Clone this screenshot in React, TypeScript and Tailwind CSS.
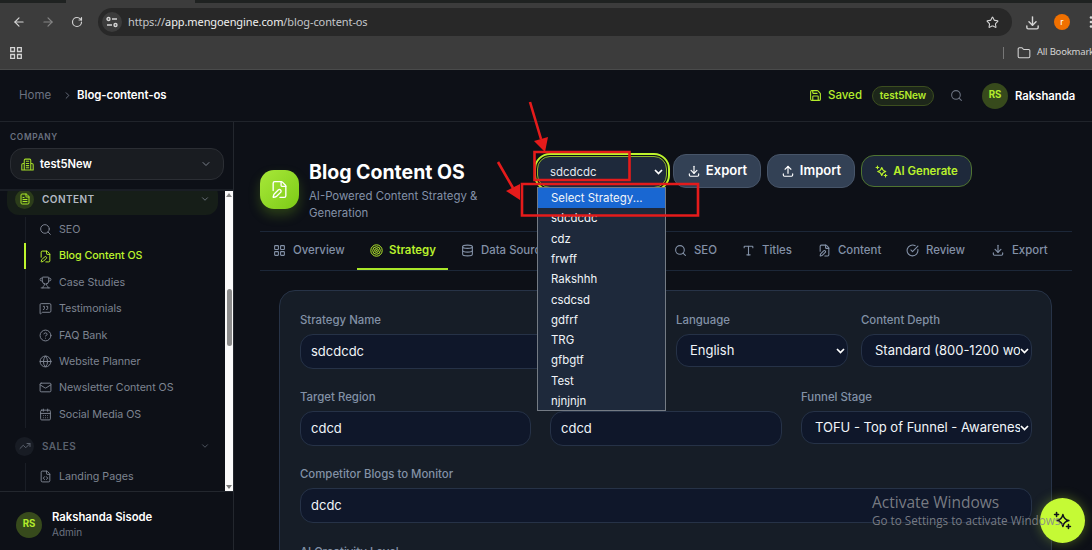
import type { ReactNode } from "react";
import {
  ArrowLeft, ArrowRight, CalendarDays, ChevronDown, ChevronRight, CircleCheckBig, CircleHelp,
  Database, FileCode, FilePen, FileText, Folder, Globe, LayoutGrid, Mail, MessageSquareQuote,
  RotateCw, Save, Search, Star, TrendingUp, Trophy, Type,
} from "lucide-react";
import { TbDownload, TbUpload } from "react-icons/tb";

function Sparkle({ size, width = 2 }: { size: number; width?: number }) {
  return (
    <svg width={size} height={size} viewBox="0 0 24 24" fill="none" stroke="currentColor" strokeWidth={width} strokeLinejoin="round" strokeLinecap="round" className="shrink-0">
      <path d="M12.500 4.500c1 4.700 2.800 6.500 7.500 7.500-4.700 1-6.500 2.800-7.500 7.500C11.500 14.800 9.700 13 5 12c4.700-1 6.500-2.800 7.500-7.500Z" />
      <path d="M4.500 2v5M2 4.500h5M19.500 17v5M17 19.500h5" />
    </svg>
  );
}

function Rings({ size }: { size: number }) {
  return (
    <svg width={size} height={size} viewBox="0 0 24 24" fill="none" stroke="currentColor" strokeWidth="1.8" className="shrink-0">
      <circle cx="12" cy="12" r="10.500" />
      <circle cx="12" cy="12" r="7" />
      <circle cx="12" cy="12" r="3.500" />
      <circle cx="12" cy="12" r="0.800" />
    </svg>
  );
}

function Building() {
  return (
    <svg width="13" height="13" viewBox="0 0 24 24" fill="none" stroke="currentColor" strokeWidth="2" strokeLinejoin="round" className="shrink-0">
      <path d="M6 22V4q0-2 2-2h8q2 0 2 2v18M6 10H4q-2.500 0-2.500 2.500V22h21v-9.500Q22.500 10 20 10h-2M9 6h6M9 10h6M9 14h6M9 18h6" />
    </svg>
  );
}

function Caret({ className }: { className?: string }) {
  return (
    <svg width="9" height="6" viewBox="0 0 9 6" fill="none" stroke="#fff" strokeWidth="1.700" className={className}>
      <path d="M1 1l3.500 3.500L8 1" />
    </svg>
  );
}

function BrowserBar() {
  return (
    <div className="flex h-[70px] shrink-0 flex-col border-b border-[#4a4b4b] bg-[#3c3c3c] text-[#d5d5d5]">
      <div className="flex h-[3px] shrink-0 bg-[#1f2221]">
        <div className="ml-[66px] w-[129px] bg-[#3c3c3c]" />
      </div>
      <div className="mt-[5px] flex h-7 shrink-0 items-center">
        <ArrowLeft size={14} className="ml-3 shrink-0" />
        <ArrowRight size={14} className="ml-[15px] shrink-0 text-[#858585]" />
        <RotateCw size={12} strokeWidth={2.300} className="ml-[16px] shrink-0" />
        <div className="ml-[15px] flex h-7 w-[914px] shrink-0 items-center rounded-full bg-[#282828] pl-1">
          <div className="flex h-5 w-5 items-center justify-center rounded-full bg-[#3c3c3c]">
            <svg width="12" height="12" viewBox="0 0 12 12" fill="none" stroke="currentColor" strokeWidth="1.400">
              <circle cx="2.500" cy="3" r="1.500" /><path d="M6 3h5M1 9h5" /><circle cx="9.500" cy="9" r="1.500" />
            </svg>
          </div>
          <span className="ml-[6px] whitespace-nowrap font-['Noto_Sans',sans-serif] text-[11px] tracking-[-0.100px] text-[#c4c6ca]">
            https://<span className="text-[#f0f0f0]">app.mengoengine.com</span>/blog-content-os
          </span>
          <Star size={13} className="mr-[13px] ml-auto" />
        </div>
        <TbDownload size={17} className="ml-[12px] shrink-0" />
        <div className="ml-[13px] flex h-4 w-4 shrink-0 items-center justify-center rounded-full bg-[#f07000] text-[9px] text-white">r</div>
        <svg width="4" height="14" viewBox="0 0 4 14" fill="currentColor" className="ml-[19px] shrink-0">
          <circle cx="2" cy="2.500" r="1.300" /><circle cx="2" cy="7" r="1.300" /><circle cx="2" cy="11.500" r="1.300" />
        </svg>
      </div>
      <div className="flex h-[33px] items-center overflow-hidden pl-2.5">
        <svg width="12" height="12" viewBox="0 0 12 12" fill="none" stroke="currentColor" strokeWidth="1.300" className="shrink-0">
          <path d="M.7.7h3.800v3.800H.7zM7.500.7h3.800v3.800H7.500zM.7 7.500h3.800v3.800H.7zM7.500 7.500h3.800v3.800H7.500z" />
        </svg>
        <div className="ml-[981px] h-3 w-px shrink-0 bg-[#777]" />
        <Folder size={14} strokeWidth={1.800} className="ml-[13px] shrink-0" />
        <span className="ml-[6px] whitespace-nowrap font-['Noto_Sans',sans-serif] text-[9.500px] tracking-[-0.200px]">All Bookmarks</span>
      </div>
    </div>
  );
}

function TopBar() {
  return (
    <header className="flex h-[52px] shrink-0 items-center border-b border-[#20242b] pl-5">
      <span className="-ml-px w-[33px] pt-px text-[11.500px] text-[#6b7280]">Home</span>
      <ChevronRight size={11} className="ml-[10px] text-[#6b7280]" />
      <span className="ml-[4px] pt-px text-[11.400px] font-semibold tracking-[-0.050px] text-white">Blog-content-os</span>
      <div className="mr-[17px] ml-auto flex items-center">
        <Save size={13} className="text-[#b4ec2c]" />
        <span className="ml-[6px] pt-px text-[11.500px] font-medium text-[#b4ec2c]">Saved</span>
        <div className="ml-[10px] flex h-5 w-[62px] items-center justify-center rounded-full border border-[#3c4e1f] bg-[#1d271a] text-[10px] font-semibold text-[#b4ec2c]">test5New</div>
        <Search size={13} className="ml-[16px] text-[#6b7280]" />
        <div className="ml-[19px] flex h-[26px] w-[26px] items-center justify-center rounded-full bg-[#374a1c] text-[9.700px] font-bold text-[#b4ec2c]">RS</div>
        <span className="ml-[7px] w-[60px] pt-px text-[11.300px] font-semibold text-white">Rakshanda</span>
      </div>
    </header>
  );
}

const links = [
  { icon: Search, label: "SEO" },
  { icon: FilePen, label: "Blog Content OS", active: true },
  { icon: Trophy, label: "Case Studies" },
  { icon: MessageSquareQuote, label: "Testimonials" },
  { icon: CircleHelp, label: "FAQ Bank" },
  { icon: Globe, label: "Website Planner" },
  { icon: Mail, label: "Newsletter Content OS" },
  { icon: CalendarDays, label: "Social Media OS" },
];

function Sidebar() {
  return (
    <aside className="flex w-[234px] shrink-0 flex-col border-r border-[#23272e]">
      <div className="h-[69px] shrink-0 border-b-2 border-[#1a1e25] px-[10px] pt-[9px]">
        <div className="text-[8.300px] leading-3 font-semibold tracking-[0.700px] text-[#6b7280]">COMPANY</div>
        <div className="mt-[5px] flex h-8 w-[214px] items-center rounded-[13px] border border-[#2b2e34] bg-[#191c21] pr-[11px] pl-[10px]">
          <span className="text-[#a3dc28]"><Building /></span>
          <span className="ml-[6px] pt-px text-[11.200px] font-semibold text-white">test5New</span>
          <ChevronDown size={12} className="ml-auto text-[#7a808b]" />
        </div>
      </div>
      <div className="flex h-[300px] shrink-0 overflow-hidden">
        <div className="w-[225px] pl-[7px]">
          <div className="-mt-2 flex h-8 w-[211px] items-center rounded-xl bg-[#161e18] pr-2 pl-2">
            <div className="flex h-[19px] w-[19px] items-center justify-center rounded-full bg-[#2c3d1a] text-[#a9e629]"><FileText size={12} /></div>
            <span className="ml-2 text-[10px] font-semibold tracking-[0.450px] text-[#b4bac4]">CONTENT</span>
            <ChevronDown size={10} className="ml-auto text-[#7a808b]" />
          </div>
          <div className="mt-[1.500px] ml-[18px] border-l border-[#1a1e26] pb-px">
            {links.map(({ icon: Icon, label, active }) => (
              <div key={label} className={active ? "-ml-[2px] flex h-[26.350px] items-center border-l-2 border-[#bdf52d] pl-[13px] text-[#bdf52d]" : "flex h-[26.350px] items-center pl-[13px] text-[#7d8491]"}>
                <Icon size={13} strokeWidth={1.800} />
                <span className={active ? "ml-[7px] pt-px text-[10.700px] font-medium tracking-[-0.050px]" : "ml-[7px] pt-px text-[10.700px] tracking-[-0.030px]"}>{label}</span>
              </div>
            ))}
          </div>
          <div className="mt-[6px] flex h-6 w-[211px] items-center pr-2 pl-2 text-[#5a616d]">
            <div className="flex h-[19px] w-[19px] items-center justify-center rounded-full bg-[#181c24]"><TrendingUp size={12} /></div>
            <span className="ml-2 text-[10px] font-semibold tracking-[0.450px]">SALES</span>
            <ChevronDown size={10} className="ml-auto" />
          </div>
          <div className="mt-[5px] ml-[18px] flex h-7 items-center border-l border-[#1a1e26] pb-px pl-[13px] text-[#7d8491]">
            <FileCode size={13} strokeWidth={1.800} />
            <span className="ml-[7px] pt-px text-[10.700px]">Landing Pages</span>
          </div>
        </div>
        <div className="flex w-2 flex-col items-center bg-[#fafafa]">
          <svg width="6" height="4" viewBox="0 0 6 4" className="mt-[2px]"><path d="M0 4l3-4 3 4z" fill="#888" /></svg>
          <div className="mt-[92px] h-[57px] w-[5px] rounded-full bg-[#8c8c8c]" />
          <svg width="6" height="4" viewBox="0 0 6 4" className="mt-auto mb-[2px]"><path d="M0 0l3 4 3-4z" fill="#777" /></svg>
        </div>
      </div>
      <div className="flex grow items-center border-t border-[#23272e] pt-[7px] pl-4">
        <div className="flex h-[26px] w-[26px] items-center justify-center rounded-full bg-[#374a1c] text-[9.700px] font-bold text-[#b4ec2c]">RS</div>
        <div className="ml-[10px]">
          <div className="text-[11.300px] leading-[15px] font-semibold text-white">Rakshanda Sisode</div>
          <div className="text-[10px] leading-[15px] text-[#6b7280]">Admin</div>
        </div>
      </div>
    </aside>
  );
}

const tabs: { icon: ReactNode; label: string; size: string; active?: boolean }[] = [
  { icon: <LayoutGrid size={13} />, label: "Overview", size: "w-[97px]" },
  { icon: <Rings size={13} />, label: "Strategy", size: "w-[91px]", active: true },
  { icon: <Database size={13} />, label: "Data Sources", size: "w-[213px]" },
  { icon: <Search size={13} />, label: "SEO", size: "w-[68px]" },
  { icon: <Type size={13} />, label: "Titles", size: "w-[76px]" },
  { icon: <FilePen size={13} />, label: "Content", size: "w-[88px]" },
  { icon: <CircleCheckBig size={13} />, label: "Review", size: "w-[85px]" },
  { icon: <TbDownload size={14} />, label: "Export", size: "w-[84px]" },
];

const options = ["Select Strategy...", "sdcdcdc", "cdz", "frwff", "Rakshhh", "csdcsd", "gdfrf", "TRG", "gfbgtf", "Test", "njnjnjn"];

function PageHeader() {
  return (
    <div className="flex h-[109px] shrink-0 pl-[26px]">
      <div className="mt-12 flex h-[39px] w-[39px] items-center justify-center rounded-[14px] bg-linear-to-br from-[#a8e838] to-[#7ccb14] text-white shadow-[0_6px_12px_rgba(132,204,22,0.250)]">
        <FilePen size={19} strokeWidth={1.700} />
      </div>
      <div className="mt-[37px] ml-[10px] w-[226px]">
        <h1 className="text-[19.500px] leading-[27px] font-bold whitespace-nowrap text-white">Blog Content OS</h1>
        <p className="mt-[2px] w-[180px] text-[11.400px] leading-[17px] text-[#8391a7]">AI-Powered Content Strategy &amp; Generation</p>
      </div>
      <div className="relative mt-[34px] ml-[2px] h-[32px] w-[130px]">
        <div className="flex h-8 items-center rounded-[13px] border border-[#8fb92a] bg-[#1e293b] pr-[3px] pl-[12px] text-[11.400px] text-[#e2e8f0] outline-2 outline-offset-1 outline-[#bdf52d]">
          <span className="mt-px">sdcdcdc</span>
          <Caret className="ml-auto" />
        </div>
        <div className="absolute top-[31px] left-0 z-10 h-[224px] w-[129px] overflow-hidden border border-[#747b84] bg-[#1e293b] text-[11.400px] text-[#f1f5f9]">
          {options.map((option, i) => (
            <div key={option} className={i === 0 ? "flex h-[20.300px] items-center bg-[#1967d2] pl-[13px]" : "flex h-[20.300px] items-center pt-px pl-[13px]"}>{option}</div>
          ))}
        </div>
      </div>
      <div className="mt-[32px] ml-[6px] flex h-[34px] w-[88px] items-center justify-center rounded-[13px] border border-[#475569] bg-[#334155] text-[13px] font-semibold text-white">
        <TbDownload size={14} className="mr-[5px]" />Export
      </div>
      <div className="mt-[32px] ml-[6px] flex h-[34px] w-[88px] items-center justify-center rounded-[13px] border border-[#475569] bg-[#334155] text-[13px] font-semibold text-white">
        <TbUpload size={14} className="mr-[5px]" />Import
      </div>
      <div className="mt-[33px] ml-[6px] flex h-8 w-[111px] items-center justify-center rounded-[13px] border border-[#4f7431] bg-[#1e293b] text-[11.400px] font-semibold text-[#b9f12c]">
        <Sparkle size={13} /><span className="ml-[5px] pt-px tracking-[-0.050px]">AI Generate</span>
      </div>
    </div>
  );
}

function Field({ label, value, select }: { label?: string; value: string; select?: boolean }) {
  return (
    <div className="flex h-[77.200px] min-w-0 flex-col">
      <div className="h-[14px] text-[11.400px] leading-[14px] font-medium whitespace-nowrap text-[#8291a6]">{label}</div>
      <div className={select
        ? "mt-[7px] flex h-[33px] items-center rounded-[13px] border border-[#263247] bg-[#0f172a] pr-[2px] pl-[13px] text-[13px] text-[#f1f5f9]"
        : "mt-[7px] flex h-[35px] items-center rounded-[13px] border border-[#263247] bg-[#0f172a] px-[10px] text-[13px] text-[#f1f5f9]"}>
        <span className="min-w-0 flex-1 overflow-hidden whitespace-nowrap">{value}</span>
        {select && <Caret className="shrink-0" />}
      </div>
    </div>
  );
}

function StrategyForm() {
  return (
    <div className="mt-[19px] mr-10 ml-[45px] h-[320px] shrink-0 rounded-[16px] border border-[#273347] bg-[#161d27] pt-[22px] pr-[19px] pl-5">
      <div className="grid grid-cols-[363px_172px_171px] gap-[13px]">
        <Field label="Strategy Name" value="sdcdcdc" />
        <Field label="Language" value="English" select />
        <Field label="Content Depth" value="Standard (800-1200 words)" select />
      </div>
      <div className="grid grid-cols-[231px_232px_231px] gap-[19px]">
        <Field label="Target Region" value="cdcd" />
        <Field value="cdcd" />
        <Field label="Funnel Stage" value="TOFU - Top of Funnel - Awareness" select />
      </div>
      <Field label="Competitor Blogs to Monitor" value="dcdc" />
      <Field label="AI Creativity Level" value="" />
    </div>
  );
}

export default function App() {
  return (
    <div className="relative flex h-[550px] w-[1092px] flex-col overflow-hidden bg-[#0d1017] font-['Inter',sans-serif]">
      <BrowserBar />
      <TopBar />
      <div className="flex min-h-0 flex-1">
        <Sidebar />
        <main className="flex min-w-0 flex-1 flex-col">
          <PageHeader />
          <nav className="mr-5 ml-[26px] flex h-10 shrink-0 border-y border-[#1c2738]">
            {tabs.map((tab, i) => (
              <div key={i} className={`${tab.size} flex shrink-0 items-center border-b-2 pl-[13px] text-[11.400px] font-medium ${tab.active ? "border-[#a9e629] text-[#b9f12c]" : "border-transparent text-[#8391a7]"}`}>
                {tab.icon}<span className={tab.active ? "ml-[6px] pt-[2px] font-semibold" : "ml-[7px] pt-[2px]"}>{tab.label}</span>
              </div>
            ))}
          </nav>
          <StrategyForm />
        </main>
      </div>

      <div className="absolute top-[498px] left-[1040px] z-20 flex h-[45px] w-[45px] items-center justify-center rounded-full bg-[#c5fa35] text-[#11151b] shadow-[0_0_12px_rgba(190,242,50,0.350)]"><Sparkle size={19} /></div>
      <div className="absolute top-[492px] left-[872px] z-30 font-['Open_Sans',sans-serif] whitespace-nowrap text-[#85888e]/90">
        <div className="text-[15.500px] leading-5">Activate Windows</div>
        <div className="text-[11.700px] leading-4">Go to Settings to activate Windows.</div>
      </div>
      <svg width="1092" height="550" viewBox="0 0 1092 550" fill="none" stroke="#e51b1b" strokeWidth="2.600" className="pointer-events-none absolute inset-0 z-40">
        <path d="M534.500 152h95v28h-95zM522 184h176v31.500H522zM530 102l11 37M498 162l15 26" />
        <path d="M534 141l14-4-3 15zM506 191l14-7v16z" fill="#e51b1b" stroke="none" />
      </svg>
    </div>
  );
}
